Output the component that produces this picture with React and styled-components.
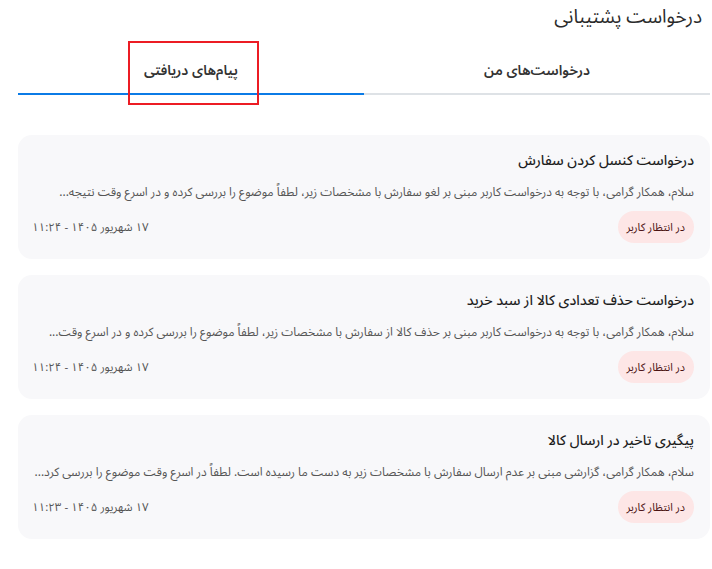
import React from 'react';
import styled, { createGlobalStyle } from 'styled-components';

const GlobalStyle = createGlobalStyle`
	html, body {
		margin: 0;
		padding: 0;
		background: #ffffff;
	}
	body {
		font-family: "Noto Sans Arabic", "DejaVu Sans", sans-serif;
		color: #222;
	}
	* {
		box-sizing: border-box;
	}
`;

// snippets are cut short on the server, the "..." is part of the text
const tickets = [
	{
		id: 1,
		title: 'درخواست کنسل کردن سفارش',
		body: 'سلام، همکار گرامی، با توجه به درخواست کاربر مبنی بر لغو سفارش با مشخصات زیر، لطفاً موضوع را بررسی کرده و در اسرع وقت نتیجه...',
		date: '۱۷ شهریور ۱۴۰۵ - ۱۱:۲۴',
		status: 'در انتظار کاربر',
	},
	{
		id: 2,
		title: 'درخواست حذف تعدادی کالا از سبد خرید',
		body: 'سلام، همکار گرامی، با توجه به درخواست کاربر مبنی بر حذف کالا از سفارش با مشخصات زیر، لطفاً موضوع را بررسی کرده و در اسرع وقت...',
		date: '۱۷ شهریور ۱۴۰۵ - ۱۱:۲۴',
		status: 'در انتظار کاربر',
	},
	{
		id: 3,
		title: 'پیگیری تاخیر در ارسال کالا',
		body: 'سلام، همکار گرامی، گزارشی مبنی بر عدم ارسال سفارش با مشخصات زیر به دست ما رسیده است. لطفاً در اسرع وقت موضوع را بررسی کرد...',
		date: '۱۷ شهریور ۱۴۰۵ - ۱۱:۲۳',
		status: 'در انتظار کاربر',
	},
];

const tabs = [
	{ key: 'mine', label: 'درخواست‌های من' },
	{ key: 'inbox', label: 'پیام‌های دریافتی' },
];

class App extends React.Component {
	constructor(props) {
		super(props);
		this.state = { active: 'inbox' };
	}

	render() {
		return (
			<Page dir="rtl">
				<GlobalStyle />
				<Header>
					<PageTitle>درخواست پشتیبانی</PageTitle>
				</Header>
				<TabBar>
					{tabs.map((tab) => {
						const active = tab.key === this.state.active;
						return (
							<Tab
								key={tab.key}
								$active={active}
								onClick={() => this.setState({ active: tab.key })}
							>
								{tab.label}
								{active && <Highlight />}
							</Tab>
						);
					})}
				</TabBar>
				<List>
					{tickets.map((item) => {
						return (
							<Card key={item.id}>
								<CardTitle>{item.title}</CardTitle>
								<Snippet>{item.body}</Snippet>
								<CardFooter>
									<Badge>{item.status}</Badge>
									<DateText>{item.date}</DateText>
								</CardFooter>
							</Card>
						);
					})}
				</List>
			</Page>
		);
	}
}

export default App;

export const Page = styled.div`
	direction: rtl;
	width: 712px;
	padding: 0 2px 30px 18px;
	display: flex;
	flex-direction: column;
`;

export const Header = styled.div`
	display: flex;
	padding: 2px 8px 0 0;
	height: 47px;
`;

export const PageTitle = styled.h1`
	margin: 0;
	font-size: 19px;
	line-height: 30px;
	font-weight: 400;
	color: #2b2b2b;
`;

export const TabBar = styled.div`
	display: flex;
	height: 48px;
`;

export const Tab = styled.div`
	position: relative;
	flex: 1;
	display: flex;
	align-items: center;
	justify-content: center;
	font-size: 14px;
	font-weight: 600;
	color: #333;
	cursor: pointer;
	border-bottom: 2px solid ${(p) => (p.$active ? '#0b7be6' : '#dee2e6')};
`;

const Highlight = styled.span`
	position: absolute;
	top: -6px;
	left: calc(50% - 63px);
	width: 131px;
	height: 64px;
	border: 2.5px solid #ec1c24;
	pointer-events: none;
`;

export const List = styled.div`
	display: flex;
	flex-direction: column;
	gap: 16px;
	margin-top: 40px;
`;

export const Card = styled.div`
	background: #f8f8fa;
	border-radius: 14px;
	padding: 16px 16px 16px 14px;
	display: flex;
	flex-direction: column;
	height: 124px;
`;

export const CardTitle = styled.div`
	font-size: 14px;
	line-height: 20px;
	font-weight: 500;
	color: #1f1f1f;
`;

export const Snippet = styled.div`
	margin-top: 12px;
	font-size: 12px;
	line-height: 20px;
	color: #555;
	white-space: nowrap;
`;

export const CardFooter = styled.div`
	margin-top: 8px;
	display: flex;
	align-items: center;
	justify-content: space-between;
`;

export const Badge = styled.span`
	display: inline-flex;
	align-items: center;
	height: 32px;
	padding: 0 9px;
	border-radius: 16px;
	background: #fde6e6;
	color: #4a1212;
	font-size: 11px;
`;

export const DateText = styled.span`
	font-size: 11.5px;
	color: #555;
`;
